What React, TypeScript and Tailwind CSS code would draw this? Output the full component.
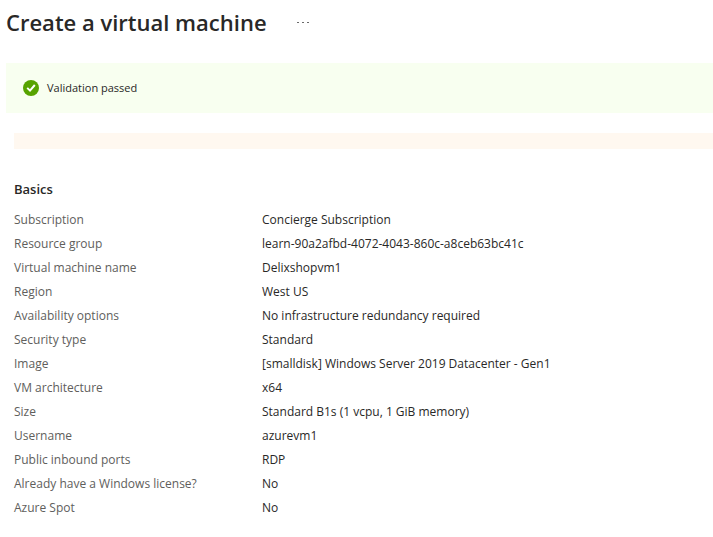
const basics: [string, string][] = [
  ["Subscription", "Concierge Subscription"],
  ["Resource group", "learn-90a2afbd-4072-4043-860c-a8ceb63bc41c"],
  ["Virtual machine name", "Delixshopvm1"],
  ["Region", "West US"],
  ["Availability options", "No infrastructure redundancy required"],
  ["Security type", "Standard"],
  ["Image", "[smalldisk] Windows Server 2019 Datacenter - Gen1"],
  ["VM architecture", "x64"],
  ["Size", "Standard B1s (1 vcpu, 1 GiB memory)"],
  ["Username", "azurevm1"],
  ["Public inbound ports", "RDP"],
  ["Already have a Windows license?", "No"],
  ["Azure Spot", "No"],
];

function CheckBadge() {
  return (
    <svg className="size-4 shrink-0" viewBox="0 0 16 16" aria-hidden="true">
      <circle cx="8" cy="8" r="8" fill="#57a300" />
      <path d="M4.2 7.9 L7 10.6 L11.8 5" fill="none" stroke="#fff" strokeWidth="2" />
    </svg>
  );
}

function MoreButton() {
  return (
    <button type="button" aria-label="More options" className="flex h-4 items-center">
      <svg className="h-4 w-3" viewBox="0 0 12 16" fill="#6b6b6b" aria-hidden="true">
        <rect x="0" y="8" width="2" height="1" />
        <rect x="5" y="8" width="2" height="1" />
        <rect x="10" y="8" width="2" height="1" />
      </svg>
    </button>
  );
}

export default function App() {
  return (
    <main className="min-h-screen bg-white pb-4 pl-1.5 font-['Segoe_UI','Open_Sans',sans-serif] text-xs leading-6 text-[#292827]">
      <header className="flex items-center gap-[30px] pt-1.5">
        <h1 className="text-[22px] leading-8 font-semibold">Create a virtual machine</h1>
        <MoreButton />
      </header>

      <div role="status" className="mt-[25px] flex items-center gap-2 bg-[#f8fff0] px-[17px] py-[13px] text-[11px] leading-6">
        <CheckBadge />
        <span>Validation passed</span>
      </div>

      <div className="mt-5 ml-2 h-4 bg-[#fff8f0]" />

      <section className="mt-7 ml-2">
        <h2 className="text-[13px] leading-6 font-semibold">Basics</h2>
        <dl className="mt-[7px]">
          {basics.map(([label, value]) => (
            <div key={label} className="flex">
              <dt className="w-62 shrink-0 text-[#605e5c]">{label}</dt>
              <dd>{value}</dd>
            </div>
          ))}
        </dl>
      </section>
    </main>
  );
}
